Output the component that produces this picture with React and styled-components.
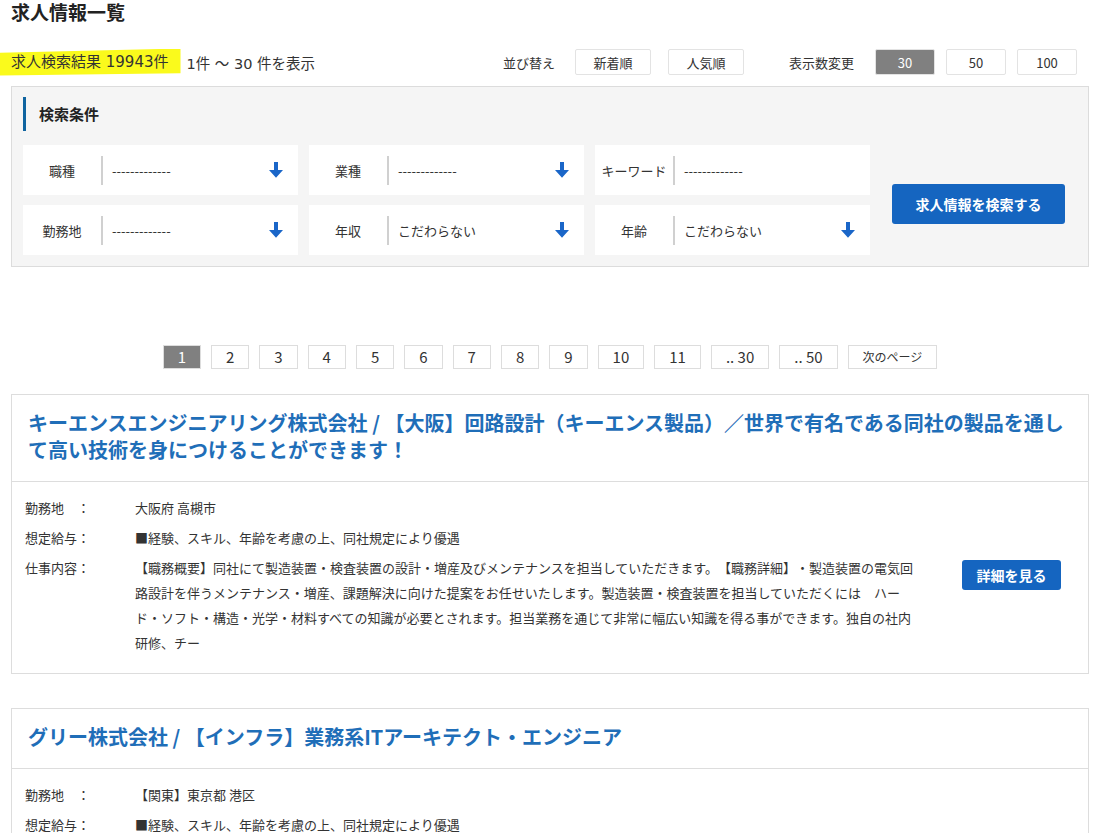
import React from "react";
import styled, { createGlobalStyle } from "styled-components";

const GlobalStyle = createGlobalStyle`
  html, body { margin: 0; padding: 0; background: #fff; }
  body {
    font-family: "Noto Sans CJK JP", "Noto Sans", sans-serif;
    color: #333;
    text-spacing-trim: space-all;
  }
  * { box-sizing: border-box; }
`;

const Page = styled.div`
  padding: 0 10px 40px 11px;
`;

const PageTitle = styled.h1`
  margin: 0;
  font-size: 19px;
  font-weight: bold;
  line-height: 24px;
  color: #222;
`;

const TopBar = styled.div`
  display: flex;
  align-items: center;
  margin-top: 25px;
  height: 26px;
`;

const Highlight = styled.span`
  margin-left: -11px;
  padding: 3px 12px 3px 11px;
  font-family: "DejaVu Sans", "Noto Sans CJK JP", sans-serif;
  font-size: 15px;
  line-height: 21px;
  background: #fafa1c;
  clip-path: polygon(0 16%, 100% 0, 100% 92%, 0 100%);
`;

const ResultRange = styled.span`
  margin-left: 6px;
  font-family: "DejaVu Sans", "Noto Sans CJK JP", sans-serif;
  font-size: 14.5px;
  color: #333;
`;

const Controls = styled.div`
  margin-left: auto;
  margin-right: 12px;
  display: flex;
  align-items: center;
`;

const ControlLabel = styled.span`
  font-size: 13px;
  color: #333;
  margin-left: ${(p) => p.$offset || 0}px;
  margin-right: ${(p) => p.$gap}px;
`;

const ButtonGroup = styled.div`
  display: flex;
  gap: ${(p) => p.$gap}px;
`;

const ToggleButton = styled.button`
  width: ${(p) => p.$width}px;
  height: 26px;
  border: 1px solid #e3e3e3;
  border-radius: 2px;
  background: ${(p) => (p.$active ? "#808080" : "#fff")};
  color: ${(p) => (p.$active ? "#fff" : "#333")};
  font-family: inherit;
  font-size: 13px;
  padding: 0;
`;

const SearchPanel = styled.section`
  margin-top: 11px;
  border: 1px solid #dcdcdc;
  background: #f5f5f5;
  padding: 10px 22px 11px 11px;
`;

const PanelHeading = styled.h2`
  margin: 0;
  border-left: 3px solid #0f64a0;
  padding-left: 13px;
  height: 34px;
  line-height: 34px;
  font-size: 15px;
  font-weight: bold;
  color: #222;
`;

const PanelBody = styled.div`
  margin-top: 14px;
  display: flex;
  align-items: center;
`;

const FieldGrid = styled.div`
  display: grid;
  grid-template-columns: repeat(3, 275px);
  grid-auto-rows: 50px;
  gap: 10px 11px;
`;

const Field = styled.div`
  background: #fff;
  display: flex;
  align-items: center;
`;

const FieldLabel = styled.span`
  width: 78px;
  flex-shrink: 0;
  text-align: center;
  font-size: 13px;
  white-space: nowrap;
  color: #333;
`;

const FieldDivider = styled.span`
  width: 2px;
  height: 29px;
  background: #d0d0d0;
  flex-shrink: 0;
`;

const FieldValue = styled.span`
  flex: 1;
  padding-left: 9px;
  font-size: 13px;
  color: #333;
`;

const ArrowSvg = styled.svg`
  margin-right: 15px;
  flex-shrink: 0;
`;

const SearchButton = styled.button`
  margin-left: 22px;
  margin-top: 8px;
  width: 173px;
  height: 40px;
  border: none;
  border-radius: 3px;
  background: #1565c0;
  color: #fff;
  font-family: inherit;
  font-size: 14px;
  font-weight: bold;
`;

const Pagination = styled.nav`
  margin-top: 78px;
  display: flex;
  justify-content: center;
  gap: 10px;
`;

const PageLink = styled.a`
  height: 24px;
  min-width: 37px;
  padding: 0 14px;
  border: 1px solid #ddd;
  background: ${(p) => (p.$active ? "#808080" : "#fff")};
  color: ${(p) => (p.$active ? "#fff" : "#333")};
  font-size: ${(p) => (p.$small ? 12 : 15)}px;
  line-height: 22px;
  text-align: center;
  text-decoration: none;
  white-space: nowrap;
`;

const CardList = styled.div`
  margin-top: 25px;
  display: flex;
  flex-direction: column;
  gap: 34px;
`;

const Card = styled.article`
  border: 1px solid #ddd;
  background: #fff;
`;

const CardHeader = styled.div`
  padding: 14px 16px 18px;
  border-bottom: 1px solid #ddd;
`;

const CardTitle = styled.h3`
  margin: 0;
  font-size: 20px;
  font-weight: bold;
  line-height: 27px;
  color: #1f6eb8;
`;

const CardBody = styled.div`
  display: flex;
  align-items: center;
  padding: 13px 27px 18px 13px;
`;

const Details = styled.div`
  width: 895px;
  flex: none;
`;

const DetailRow = styled.div`
  display: flex;
  font-size: 13px;
  line-height: 25px;
  margin-bottom: 5px;
  &:last-child { margin-bottom: 0; }
`;

const DetailLabel = styled.span`
  width: 110px;
  flex-shrink: 0;
  white-space: nowrap;
  color: #333;
`;

const DetailValue = styled.span`
  width: 785px;
  color: #333;
`;

const DetailButton = styled.button`
  margin-left: auto;
  width: 99px;
  height: 30px;
  border: none;
  border-radius: 3px;
  background: #1565c0;
  color: #fff;
  font-family: inherit;
  font-size: 14px;
  font-weight: bold;
`;

const DownArrow = () => (
  <ArrowSvg width="14" height="16" viewBox="0 0 14 16">
    <path d="M5 0 H9 V8 H14 L7 15.8 L0 8 H5 Z" fill="#1a66c8" />
  </ArrowSvg>
);

const fields = [
  { label: "職種", value: "-------------", select: true },
  { label: "業種", value: "-------------", select: true },
  { label: "キーワード", value: "-------------", select: false },
  { label: "勤務地", value: "-------------", select: true },
  { label: "年収", value: "こだわらない", select: true },
  { label: "年齢", value: "こだわらない", select: true },
];

const pages = [
  { t: "1", active: true },
  { t: "2" },
  { t: "3" },
  { t: "4" },
  { t: "5" },
  { t: "6" },
  { t: "7" },
  { t: "8" },
  { t: "9" },
  { t: "10" },
  { t: "11" },
  { t: ".. 30" },
  { t: ".. 50" },
  { t: "次のページ", small: true },
];

const jobs = [
  {
    title:
      "キーエンスエンジニアリング株式会社 / 【大阪】回路設計（キーエンス製品）／世界で有名である同社の製品を通して高い技術を身につけることができます！",
    place: "大阪府 高槻市",
    salary: "■経験、スキル、年齢を考慮の上、同社規定により優遇",
    desc:
      "【職務概要】同社にて製造装置・検査装置の設計・増産及びメンテナンスを担当していただきます。【職務詳細】・製造装置の電気回路設計を伴うメンテナンス・増産、課題解決に向けた提案をお任せいたします。製造装置・検査装置を担当していただくには\u3000ハード・ソフト・構造・光学・材料すべての知識が必要とされます。担当業務を通じて非常に幅広い知識を得る事ができます。独自の社内研修、チー",
  },
  {
    title: "グリー株式会社 / 【インフラ】業務系ITアーキテクト・エンジニア",
    place: "【関東】東京都 港区",
    salary: "■経験、スキル、年齢を考慮の上、同社規定により優遇",
    desc:
      "【職務概要】同社の業務系システムを支えるインフラ基盤の設計・構築・運用をご担当いただきます。【職務詳細】・社内業務システムのアーキテクチャ設計、クラウド環境の構築、運用改善の提案などをお任せいたします。オンプレミスとクラウドを組み合わせた環境において、可用性・拡張性・セキュリティを考慮した設計を行っていただきます。関係部署と連携しながら、業務効率化に向けたシステム全体の最適化にも携わっていただきます。",
  },
];

export default function App() {
  return (
    <>
      <GlobalStyle />
      <Page>
        <PageTitle>求人情報一覧</PageTitle>
        <TopBar>
          <Highlight>求人検索結果 19943件</Highlight>
          <ResultRange>1件 ～ 30 件を表示</ResultRange>
          <Controls>
            <ControlLabel $gap={20}>並び替え</ControlLabel>
            <ButtonGroup $gap={17}>
              <ToggleButton $width={76}>新着順</ToggleButton>
              <ToggleButton $width={76}>人気順</ToggleButton>
            </ButtonGroup>
            <ControlLabel $offset={45} $gap={21}>
              表示数変更
            </ControlLabel>
            <ButtonGroup $gap={11}>
              <ToggleButton $width={60} $active>
                30
              </ToggleButton>
              <ToggleButton $width={60}>50</ToggleButton>
              <ToggleButton $width={60}>100</ToggleButton>
            </ButtonGroup>
          </Controls>
        </TopBar>

        <SearchPanel>
          <PanelHeading>検索条件</PanelHeading>
          <PanelBody>
            <FieldGrid>
              {fields.map((f) => (
                <Field key={f.label}>
                  <FieldLabel>{f.label}</FieldLabel>
                  <FieldDivider />
                  <FieldValue>{f.value}</FieldValue>
                  {f.select && <DownArrow />}
                </Field>
              ))}
            </FieldGrid>
            <SearchButton>求人情報を検索する</SearchButton>
          </PanelBody>
        </SearchPanel>

        <Pagination>
          {pages.map((p) => (
            <PageLink key={p.t} $active={p.active} $small={p.small}>
              {p.t}
            </PageLink>
          ))}
        </Pagination>

        <CardList>
          {jobs.map((j) => (
            <Card key={j.title}>
              <CardHeader>
                <CardTitle>{j.title}</CardTitle>
              </CardHeader>
              <CardBody>
                <Details>
                  <DetailRow>
                    <DetailLabel>勤務地　：</DetailLabel>
                    <DetailValue>{j.place}</DetailValue>
                  </DetailRow>
                  <DetailRow>
                    <DetailLabel>想定給与：</DetailLabel>
                    <DetailValue>{j.salary}</DetailValue>
                  </DetailRow>
                  <DetailRow>
                    <DetailLabel>仕事内容：</DetailLabel>
                    <DetailValue>{j.desc}</DetailValue>
                  </DetailRow>
                </Details>
                <DetailButton>詳細を見る</DetailButton>
              </CardBody>
            </Card>
          ))}
        </CardList>
      </Page>
    </>
  );
}
